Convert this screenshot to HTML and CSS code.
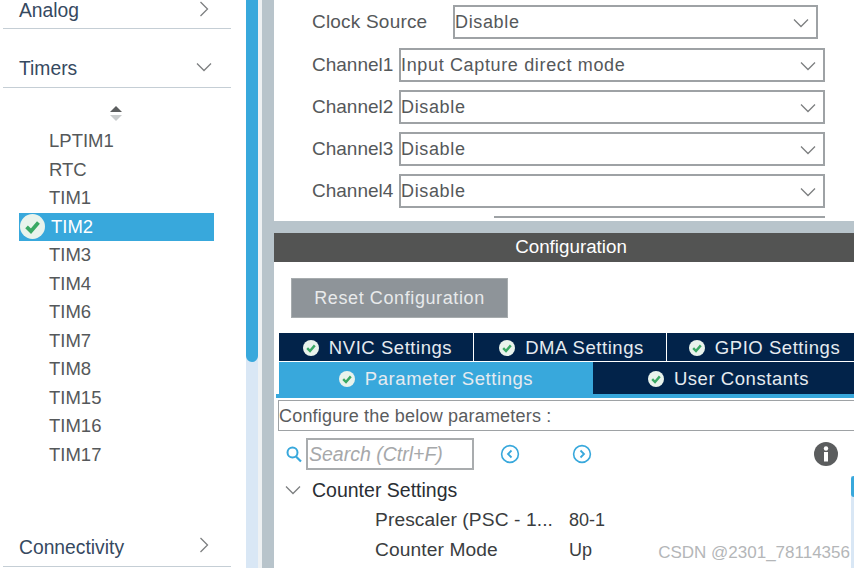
FILE: index.html
```html
<!DOCTYPE html>
<html lang="en">
<head>
    <meta charset="UTF-8">
    <title>TIM2 Configuration</title>
    <link rel="stylesheet" href="styles.css">
</head>
<body>
<svg class="defs" width="0" height="0">
    <symbol id="ok" viewBox="0 0 16 16">
        <circle cx="8" cy="8" r="8" fill="#e9f3ec"/>
        <path d="M4.2 8.2 7 11 11.8 5.4" fill="none" stroke="#3aa864" stroke-width="2.4"/>
    </symbol>
    <symbol id="down" viewBox="0 0 16 10">
        <path d="M1 1.500 8 8.500 15 1.500" fill="none" stroke="#7d7f80" stroke-width="1.3"/>
    </symbol>
    <symbol id="right" viewBox="0 0 10 16">
        <path d="M1.500 1 8.500 8 1.500 15" fill="none" stroke="#7d7f80" stroke-width="1.3"/>
    </symbol>
</svg>
<div class="app">
    <aside class="side">
        <div class="side-main">
            <div class="cat cat-top"><span>Analog</span><svg class="chev-r"><use href="#right"/></svg></div>
            <div class="cat cat-timers"><span>Timers</span><svg class="chev-d"><use href="#down"/></svg></div>
            <div class="sort">
                <svg width="12" height="16" viewBox="0 0 12 16"><path d="M6 0 12 6H0Z" fill="#5c5e5f"/><path d="M6 15 12 9H0Z" fill="#c9cccd"/></svg>
            </div>
            <ul class="timers">
                <li>LPTIM1</li>
                <li>RTC</li>
                <li>TIM1</li>
                <li class="sel"><svg class="sel-ok"><use href="#ok"/></svg>TIM2</li>
                <li>TIM3</li>
                <li>TIM4</li>
                <li>TIM6</li>
                <li>TIM7</li>
                <li>TIM8</li>
                <li>TIM15</li>
                <li>TIM16</li>
                <li>TIM17</li>
            </ul>
            <div class="cat cat-bottom"><span>Connectivity</span><svg class="chev-r"><use href="#right"/></svg></div>
        </div>
        <div class="scroll"><div class="thumb"></div></div>
    </aside>
    <main class="main">
        <section class="mode">
            <div class="row row-first">
                <label class="lbl lbl-clock">Clock Source</label>
                <div class="select select-clock">Disable<svg class="sel-arrow"><use href="#down"/></svg></div>
            </div>
            <div class="row">
                <label class="lbl">Channel1</label>
                <div class="select">Input Capture direct mode<svg class="sel-arrow"><use href="#down"/></svg></div>
            </div>
            <div class="row">
                <label class="lbl">Channel2</label>
                <div class="select">Disable<svg class="sel-arrow"><use href="#down"/></svg></div>
            </div>
            <div class="row">
                <label class="lbl">Channel3</label>
                <div class="select">Disable<svg class="sel-arrow"><use href="#down"/></svg></div>
            </div>
            <div class="row">
                <label class="lbl">Channel4</label>
                <div class="select">Disable<svg class="sel-arrow"><use href="#down"/></svg></div>
            </div>
            <div class="cut-select"></div>
        </section>
        <section class="config">
            <div class="config-head">Configuration</div>
            <div class="reset-wrap"><button class="reset">Reset Configuration</button></div>
            <div class="tabs tabs-top">
                <div class="tab tab-nvic"><svg class="tab-ok"><use href="#ok"/></svg>NVIC Settings</div>
                <div class="tab tab-dma"><svg class="tab-ok"><use href="#ok"/></svg>DMA Settings</div>
                <div class="tab tab-gpio"><svg class="tab-ok"><use href="#ok"/></svg>GPIO Settings</div>
            </div>
            <div class="tabs tabs-bottom">
                <div class="tab tab-param active"><svg class="tab-ok"><use href="#ok"/></svg>Parameter Settings</div>
                <div class="tab tab-user"><svg class="tab-ok"><use href="#ok"/></svg>User Constants</div>
            </div>
            <div class="configure">Configure the below parameters :</div>
            <div class="tools">
                <svg class="search-ico" width="16" height="17" viewBox="0 0 16 17"><circle cx="6.500" cy="6.500" r="5" fill="none" stroke="#38a8dc" stroke-width="2"/><path d="M10 10.500 15 15.500" stroke="#38a8dc" stroke-width="2.200"/></svg>
                <div class="search">Search (Ctrl+F)</div>
                <svg class="nav-prev" width="20" height="20" viewBox="0 0 20 20"><circle cx="10" cy="10" r="8.400" fill="none" stroke="#38a8dc" stroke-width="1.600"/><path d="M11.500 6.500 8 10 11.500 13.500" fill="none" stroke="#38a8dc" stroke-width="1.800"/></svg>
                <svg class="nav-next" width="20" height="20" viewBox="0 0 20 20"><circle cx="10" cy="10" r="8.400" fill="none" stroke="#38a8dc" stroke-width="1.600"/><path d="M8.500 6.500 12 10 8.500 13.500" fill="none" stroke="#38a8dc" stroke-width="1.800"/></svg>
                <svg class="info" width="24" height="24" viewBox="0 0 24 24"><circle cx="12" cy="12" r="12" fill="#5b5d5e"/><rect x="10" y="10" width="4" height="9.500" fill="#fff"/><circle cx="12" cy="6.500" r="2.200" fill="#fff"/></svg>
            </div>
            <div class="params">
                <div class="group"><svg class="group-chev"><use href="#down"/></svg>Counter Settings</div>
                <div class="param"><span class="pname">Prescaler (PSC - 1...</span><span class="pval">80-1</span></div>
                <div class="param"><span class="pname">Counter Mode</span><span class="pval">Up</span></div>
                <div class="ptrack"><div class="pthumb"></div></div>
            </div>
        </section>
    </main>
</div>
<div class="mark">CSDN @2301_78114356</div>
</body>
</html>
```

FILE: styles.css
```css
* {
    box-sizing: border-box;
}
html, body {
    margin: 0;
    height: 568px;
    overflow: hidden;
}
body {
    font-family: "Liberation Sans", Arial, sans-serif;
    background-color: #fff;
    color: #4f5254;
    font-size: 18px;
    position: relative;
}
.defs {
    position: absolute;
}
.app {
    display: flex;
    width: 854px;
    height: 568px;
}

/* left column */
.side {
    width: 262px;
    display: flex;
    flex-shrink: 0;
}
.side-main {
    width: 246px;
    padding: 0 15px 0 3px;
}
.cat {
    display: flex;
    align-items: center;
    justify-content: space-between;
    height: 29px;
    padding: 0 22px 0 16px;
    border-bottom: 1px solid #c5ced5;
    color: #36495f;
    font-size: 19.300px;
}
.cat-top {
    padding-bottom: 7px;
}
.cat-top .chev-r {
    margin-bottom: 4px;
}
.cat-timers {
    margin-top: 30px;
    padding: 0 19px 8px 16px;
}
.chev-r {
    width: 10px;
    height: 16px;
}
.chev-d {
    width: 16px;
    height: 10px;
    margin-bottom: 5px;
}
.sort {
    height: 21px;
    margin-top: 18px;
    padding-left: 107px;
}
.timers {
    list-style: none;
    margin: 0;
    padding: 0 0 0 16px;
    height: 411px;
}
.timers li {
    height: 28.550px;
    line-height: 28.550px;
    padding-left: 30px;
    font-size: 18.500px;
    color: #55585a;
}
.timers .sel {
    display: flex;
    align-items: center;
    width: 195px;
    background-color: #38a8dc;
    color: #fff;
    padding-left: 1px;
}
.sel-ok {
    width: 25px;
    height: 25px;
    margin-right: 6px;
}
.cat-bottom {
    height: 29px;
    padding-bottom: 8px;
}
.cat-bottom .chev-r {
    margin-bottom: 6px;
}
.scroll {
    width: 16px;
    border-right: 4px solid #eef1f3;
    background-color: #d9e7f5;
}
.thumb {
    height: 362px;
    background-color: #38a8dc;
    border-radius: 0 0 6px 6px;
}

/* right column */
.main {
    flex: 1;
    min-width: 0;
    border-left: 12px solid #b8c4cb;
    display: flex;
    flex-direction: column;
}
.mode {
    height: 221px;
    padding-top: 5px;
    overflow: hidden;
}
.row {
    display: flex;
    align-items: center;
    height: 34px;
    margin-bottom: 8px;
    padding-left: 38px;
    width: 551px;
}
.row-first {
    margin-bottom: 9px;
}
.lbl {
    width: 87px;
    font-size: 19px;
    color: #55585a;
}
.lbl-clock {
    width: 141px;
    letter-spacing: 0.200px;
}
.select {
    flex: 1;
    height: 34px;
    line-height: 31px;
    border: 2px solid #9ea2a5;
    position: relative;
    padding-left: 0;
    font-size: 18px;
    color: #55585a;
    letter-spacing: 0.650px;
}
.select-clock {
    margin-right: 7px;
}
.sel-arrow {
    position: absolute;
    right: 7px;
    top: 11px;
    width: 16px;
    height: 10px;
}
.cut-select {
    width: 331px;
    margin-left: 220px;
    height: 12px;
    border-top: 2px solid #9ea2a5;
}
.config {
    flex: 1;
    margin-top: 12px;
    position: relative;
    box-shadow: 0 -12px 0 #b8c4cb;
}
.config-head {
    height: 29px;
    line-height: 28px;
    background-color: #535453;
    color: #fff;
    text-align: center;
    font-size: 18.800px;
    padding-left: 14px;
}
.reset-wrap {
    padding: 16px 0 0 17px;
    height: 71px;
}
.reset {
    display: block;
    width: 217px;
    height: 40px;
    border: 1px solid #a7acae;
    background-color: #8e9499;
    color: #e8eaeb;
    font-family: inherit;
    font-size: 18px;
    letter-spacing: 0.600px;
    padding: 0;
}
.tabs {
    display: flex;
    padding-left: 5px;
}
.tabs-top {
    height: 29px;
}
.tabs-bottom {
    height: 36px;
    border-bottom: 4px solid #38a8dc;
    margin: 0 0 0 2px;
    padding-left: 3px;
}
.tab {
    display: flex;
    align-items: center;
    justify-content: center;
    background-color: #02234a;
    color: #e6ebf0;
    font-size: 18.500px;
    letter-spacing: 0.550px;
    height: 28px;
    padding-top: 2px;
    border-right: 1px solid #fff;
}
.tab-nvic {
    width: 195px;
    padding-left: 3px;
}
.tab-dma {
    width: 193px;
    padding-left: 3px;
}
.tab-gpio {
    flex: 1;
    padding-left: 8px;
    border-right: 0;
}
.tab-param {
    width: 314px;
    height: 32px;
    background-color: #38a8dc;
    border-right: 0;
}
.tab-user {
    flex: 1;
    height: 32px;
    border-right: 0;
    padding-left: 10px;
}
.tab-ok {
    width: 16px;
    height: 16px;
    margin-right: 10px;
}
.configure {
    margin: 2px 0 0 4px;
    height: 31px;
    line-height: 30px;
    border: 1px solid #9ea2a5;
    border-right: 0;
    padding-left: 0;
    font-size: 18px;
    letter-spacing: 0.200px;
    color: #5a5c5e;
}
.tools {
    display: flex;
    align-items: center;
    height: 40px;
    padding: 6px 0 0 12px;
}
.search {
    width: 168px;
    height: 32px;
    margin-left: 4px;
    border: 2px solid #a9acae;
    line-height: 28px;
    padding-left: 1px;
    font-style: italic;
    font-size: 19.500px;
    color: #a6a8aa;
}
.nav-prev {
    margin-left: 26px;
}
.nav-next {
    margin-left: 52px;
}
.info {
    margin-left: 222px;
}
.params {
    position: relative;
    padding-left: 11px;
}
.group {
    display: flex;
    align-items: center;
    height: 34px;
    color: #2a2e33;
    font-size: 19.500px;
    padding-top: 4px;
}
.group-chev {
    width: 16px;
    height: 10px;
    margin-right: 11px;
}
.param {
    display: flex;
    height: 30px;
    line-height: 30px;
    padding-left: 90px;
    color: #3a3d40;
}
.pname {
    width: 194px;
    font-size: 19.200px;
    letter-spacing: 0.100px;
    white-space: nowrap;
}
.pval {
    font-size: 18px;
}
.ptrack {
    position: absolute;
    right: 0;
    top: 5px;
    width: 3px;
    height: 100px;
    background-color: #d9e7f5;
}
.pthumb {
    height: 21px;
    background-color: #38a8dc;
    border-radius: 3px 0 0 3px;
}
.mark {
    position: absolute;
    right: 4px;
    bottom: 5px;
    color: #b4b6b8;
    font-size: 17px;
}
```
